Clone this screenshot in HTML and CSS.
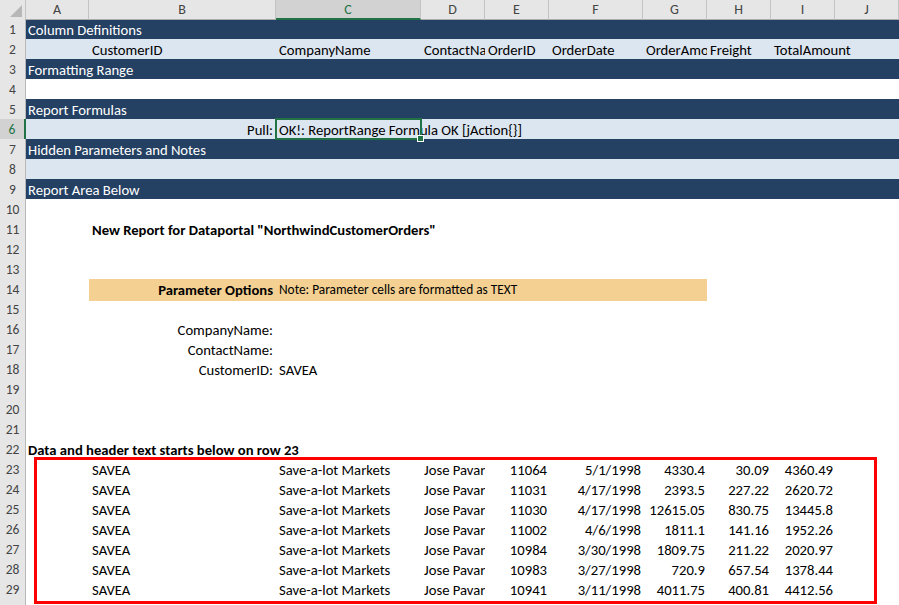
FILE: index.html
```
<!DOCTYPE html>
<html>
<head>
<meta charset="utf-8">
<link rel="stylesheet" href="styles.css">
</head>
<body>
<div class="sheet">
  <div class="row head">
    <div class="corner"><svg width="26" height="19" viewBox="0 0 26 19"><polygon points="22,5 22,17 10,17" fill="#b7b7b7"/></svg></div>
    <div class="ch">A</div><div class="ch">B</div><div class="ch sel">C</div><div class="ch">D</div><div class="ch">E</div><div class="ch">F</div><div class="ch">G</div><div class="ch">H</div><div class="ch">I</div><div class="ch">J</div>
  </div>

  <div class="row band"><div class="rh">1</div><div class="c all">Column Definitions</div></div>
  <div class="row light">
    <div class="rh">2</div><div class="c"></div><div class="c">CustomerID</div><div class="c">CompanyName</div><div class="c">ContactName</div><div class="c">OrderID</div><div class="c">OrderDate</div><div class="c">OrderAmount</div><div class="c">Freight</div><div class="c span2">TotalAmount</div>
  </div>
  <div class="row band"><div class="rh">3</div><div class="c all">Formatting Range</div></div>
  <div class="row"><div class="rh">4</div></div>
  <div class="row band"><div class="rh">5</div><div class="c all">Report Formulas</div></div>
  <div class="row light">
    <div class="rh rh-sel">6</div><div class="c"></div><div class="c r">Pull:</div><div class="c span8 active">OK!: ReportRange Formula OK [jAction{}]</div>
  </div>
  <div class="row band"><div class="rh">7</div><div class="c all">Hidden Parameters and Notes</div></div>
  <div class="row light"><div class="rh">8</div></div>
  <div class="row band"><div class="rh">9</div><div class="c all">Report Area Below</div></div>
  <div class="row"><div class="rh">10</div></div>
  <div class="row"><div class="rh">11</div><div class="c"></div><div class="c span9 b">New Report for Dataportal "NorthwindCustomerOrders"</div></div>
  <div class="row"><div class="rh">12</div></div>
  <div class="row"><div class="rh">13</div></div>
  <div class="row">
    <div class="rh">14</div><div class="c"></div>
    <div class="param">
      <div class="c r b pb">Parameter Options</div>
      <div class="c note">Note: Parameter cells are formatted as TEXT</div>
    </div>
  </div>
  <div class="row"><div class="rh">15</div></div>
  <div class="row"><div class="rh">16</div><div class="c"></div><div class="c r">CompanyName:</div></div>
  <div class="row"><div class="rh">17</div><div class="c"></div><div class="c r">ContactName:</div></div>
  <div class="row"><div class="rh">18</div><div class="c"></div><div class="c r">CustomerID:</div><div class="c">SAVEA</div></div>
  <div class="row"><div class="rh">19</div></div>
  <div class="row"><div class="rh">20</div></div>
  <div class="row"><div class="rh">21</div></div>
  <div class="row"><div class="rh">22</div><div class="c all b">Data and header text starts below on row 23</div></div>

  <div class="row"><div class="rh">23</div><div class="c"></div><div class="c">SAVEA</div><div class="c">Save-a-lot Markets</div><div class="c">Jose Pavarotti</div><div class="c n">11064</div><div class="c n">5/1/1998</div><div class="c n">4330.4</div><div class="c n">30.09</div><div class="c n">4360.49</div></div>
  <div class="row"><div class="rh">24</div><div class="c"></div><div class="c">SAVEA</div><div class="c">Save-a-lot Markets</div><div class="c">Jose Pavarotti</div><div class="c n">11031</div><div class="c n">4/17/1998</div><div class="c n">2393.5</div><div class="c n">227.22</div><div class="c n">2620.72</div></div>
  <div class="row"><div class="rh">25</div><div class="c"></div><div class="c">SAVEA</div><div class="c">Save-a-lot Markets</div><div class="c">Jose Pavarotti</div><div class="c n">11030</div><div class="c n">4/17/1998</div><div class="c n">12615.05</div><div class="c n">830.75</div><div class="c n">13445.8</div></div>
  <div class="row"><div class="rh">26</div><div class="c"></div><div class="c">SAVEA</div><div class="c">Save-a-lot Markets</div><div class="c">Jose Pavarotti</div><div class="c n">11002</div><div class="c n">4/6/1998</div><div class="c n">1811.1</div><div class="c n">141.16</div><div class="c n">1952.26</div></div>
  <div class="row"><div class="rh">27</div><div class="c"></div><div class="c">SAVEA</div><div class="c">Save-a-lot Markets</div><div class="c">Jose Pavarotti</div><div class="c n">10984</div><div class="c n">3/30/1998</div><div class="c n">1809.75</div><div class="c n">211.22</div><div class="c n">2020.97</div></div>
  <div class="row"><div class="rh">28</div><div class="c"></div><div class="c">SAVEA</div><div class="c">Save-a-lot Markets</div><div class="c">Jose Pavarotti</div><div class="c n">10983</div><div class="c n">3/27/1998</div><div class="c n">720.9</div><div class="c n">657.54</div><div class="c n">1378.44</div></div>
  <div class="row"><div class="rh">29</div><div class="c"></div><div class="c">SAVEA</div><div class="c">Save-a-lot Markets</div><div class="c">Jose Pavarotti</div><div class="c n">10941</div><div class="c n">3/11/1998</div><div class="c n">4011.75</div><div class="c n">400.81</div><div class="c n">4412.56</div></div>
  <div class="row"><div class="rh">30</div></div>

  <div class="redbox"></div>
</div>
</body>
</html>
```
FILE: styles.css
```
html, body {
  margin: 0;
  padding: 0;
}
body {
  width: 899px;
  height: 605px;
  overflow: hidden;
  background: #ffffff;
  font-family: Carlito, Lato, "Open Sans", sans-serif;
  font-size: 14.67px;
  color: #000;
}
.sheet {
  position: relative;
}
.row {
  display: grid;
  grid-template-columns: 26px 63px 187px 145px 64px 64px 94px 64px 64px 64px 64px;
  height: 20px;
  line-height: 20px;
}
.row.head {
  height: 19px;
  line-height: 19px;
}
.corner {
  background: #e6e6e6;
  border-right: 1px solid #c4c4c4;
  border-bottom: 1px solid #ababab;
  box-sizing: border-box;
  line-height: 0;
}
.ch {
  background: #e6e6e6;
  border-right: 1px solid #c4c4c4;
  border-bottom: 1px solid #ababab;
  box-sizing: border-box;
  text-align: center;
  color: #444;
  font-size: 14px;
  padding-top: 1px;
  line-height: 17px;
}
.ch.sel {
  background: #d2d2d2;
  color: #217346;
  border-bottom: 2px solid #217346;
}
.rh {
  grid-column: 1;
  background: #e6e6e6;
  border-right: 1px solid #b8b8b8;
  border-bottom: 1px solid #d0d0d0;
  box-sizing: border-box;
  text-align: center;
  color: #444;
  font-size: 13.5px;
  line-height: 20px;
  padding-top: 1px;
}
.rh.rh-sel {
  background: #d2d2d2;
  color: #217346;
  border-right: 2px solid #217346;
}
.band {
  background: #244062;
  color: #ffffff;
}
.light {
  background: #dce6f1;
}
.c {
  padding: 1px 3px 0;
  white-space: nowrap;
  overflow: hidden;
  min-width: 0;
}
.c.all {
  grid-column: 2 / -1;
  padding-left: 2px;
}
.c.span2 {
  grid-column: span 2;
}
.c.span8 {
  grid-column: span 8;
  overflow: visible;
}
.c.span9 {
  grid-column: span 9;
}
.r {
  text-align: right;
}
.n {
  text-align: right;
  padding-right: 2px;
}
.b {
  font-weight: bold;
}
.active {
  position: relative;
}
.active::after {
  content: "";
  position: absolute;
  left: -1px;
  top: -1px;
  width: 147px;
  height: 22px;
  border: 2px solid #217346;
  box-sizing: border-box;
  pointer-events: none;
}
.active::before {
  content: "";
  position: absolute;
  left: 141px;
  top: 16px;
  width: 5px;
  height: 5px;
  background: #217346;
  border: 1px solid #fff;
  z-index: 2;
}
.param {
  grid-column: 3 / 9;
  background: #f4d192;
  display: flex;
}
.param .pb {
  width: 187px;
  box-sizing: border-box;
  flex: none;
}
.param .note {
  font-size: 13.33px;
  overflow: visible;
}
.redbox {
  position: absolute;
  left: 34px;
  top: 457px;
  width: 843px;
  height: 147px;
  border: 3px solid #ff0000;
  box-sizing: border-box;
}
```
